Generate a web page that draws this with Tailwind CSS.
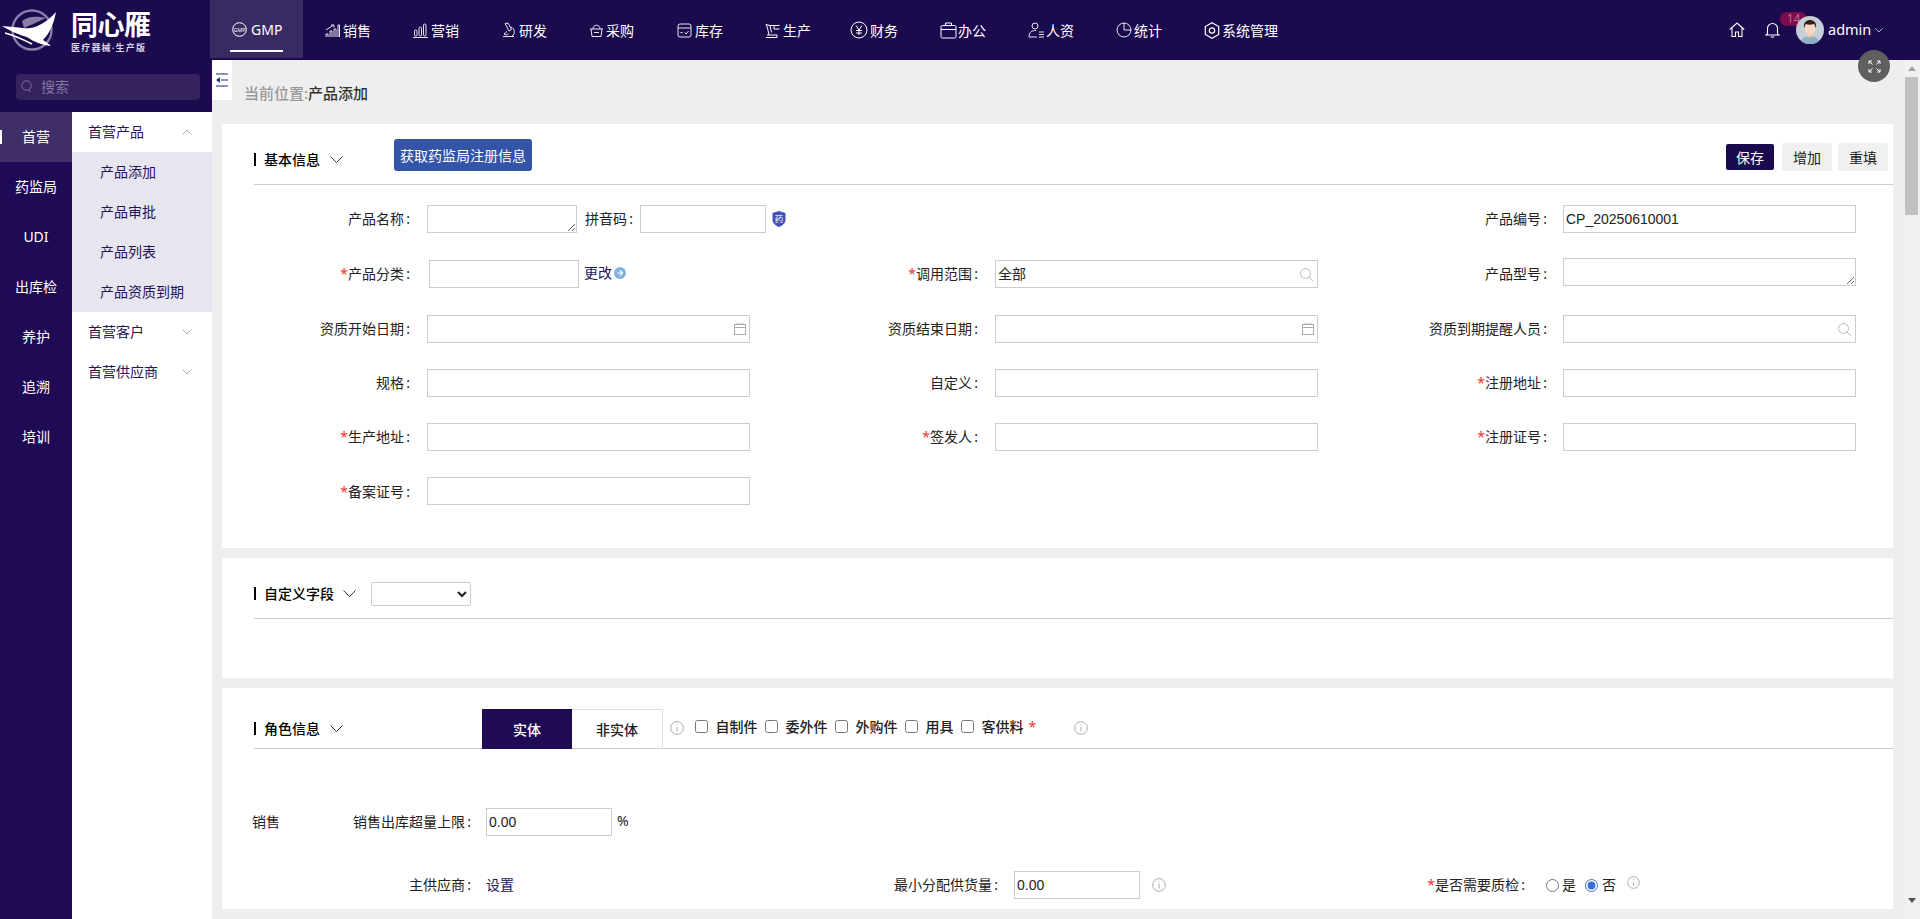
<!DOCTYPE html>
<html lang="zh-CN">
<head>
<meta charset="utf-8">
<title>产品添加</title>
<script src="https://cdn.jsdelivr.net/npm/@tailwindcss/browser@4"></script>
</head>
<body class="h-screen overflow-hidden bg-[#eeeeee] text-[14px] text-[#222] font-['Noto_Sans','Noto_Sans_CJK_SC',sans-serif]">
<div class="relative flex h-[919px] flex-col">

  <!-- top bar -->
  <header class="flex h-[60px] shrink-0 bg-[#1b0a4e] text-white">
    <div class="flex w-[210px] shrink-0">
      <svg class="mt-[9px] h-[42px] w-[58px] shrink-0" viewBox="0 0 58 42" fill="none">
        <circle cx="32" cy="21" r="19.5" stroke="#8a7ea8" stroke-width="2.4"/>
        <path d="M22 12 C30 6 40 8 46 9 C38 13 30 16 24 19Z" fill="#8a7ea8"/>
        <path d="M56 3 C54 14 50 24 43 31 C46 33 49 35 51 37 C42 36 34 33 27 28 C20 26 10 22 2 17 C10 18 17 18 23 19 C34 21 46 14 56 3Z" fill="#fff"/>
        <path d="M5 24 C14 26 22 30 32 35" stroke="#fff" stroke-width="1.5"/>
      </svg>
      <div class="ml-[13px] flex flex-col">
        <span class="mt-[8px] text-[27px] font-bold leading-[34px] tracking-[-0.5px] whitespace-nowrap">同心雁</span>
        <span class="text-[9px] font-bold leading-[12px] tracking-[1.2px] whitespace-nowrap text-[#d8d3e6]">医疗器械·生产版</span>
      </div>
    </div>
    <nav class="flex items-start text-[14px]">
      <a class="relative flex h-[58px] w-[93px] items-center gap-[4px] bg-[#3a2a63] pl-[22px]">
        <svg class="h-[15px] w-[15px]" viewBox="0 0 15 15" fill="none" stroke="#fff"><circle cx="7.5" cy="7.5" r="6.8"/><text x="7.5" y="9.5" text-anchor="middle" font-size="5.2" fill="#fff" stroke="none">GMP</text></svg>
        <span>GMP</span>
        <span class="absolute bottom-[6px] left-[20px] h-[2px] w-[53px] bg-white"></span>
      </a>
      <a class="flex h-[60px] w-[88px] items-center gap-[3px] pl-[22px]">
        <svg class="h-[15px] w-[15px]" viewBox="0 0 15 15" fill="none" stroke="#fff" stroke-width="0.9"><path d="M1 14v-3h2v3M5 14V8h2v6M9 14V6h2v8M13 14V2h1.500v12M1 7 8 2.500M6 2h3v2.500"/></svg>
        <span>销售</span>
      </a>
      <a class="flex h-[60px] w-[88px] items-center gap-[3px] pl-[22px]">
        <svg class="h-[15px] w-[15px]" viewBox="0 0 15 15" fill="none" stroke="#fff" stroke-width="0.9"><rect x="1.500" y="7" width="2.500" height="6" rx="1.200"/><rect x="6" y="4" width="2.500" height="9" rx="1.200"/><rect x="10.500" y="1" width="2.500" height="12" rx="1.200"/><path d="M0 14.500h15"/></svg>
        <span>营销</span>
      </a>
      <a class="flex h-[60px] w-[88px] items-center gap-[2px] pl-[22px]">
        <svg class="h-[16px] w-[16px]" viewBox="0 0 16 16" fill="none" stroke="#fff" stroke-width="0.9"><path d="M4 1.500 7 1l3.500 6.500-2.500 1.500zM10 5c4 1.500 4.500 7 1 9M2 14.500h11M3 12c1.500 1 3 1 4.500 0M6 9.500 3 12"/></svg>
        <span>研发</span>
      </a>
      <a class="flex h-[60px] w-[88px] items-center gap-[2px] pl-[22px]">
        <svg class="h-[15px] w-[15px]" viewBox="0 0 15 15" fill="none" stroke="#fff" stroke-width="0.9"><path d="M1 6h13M2 6l1 7.500h9L13 6M4 6c0-5 7-5 7 0M5 9.500h5"/></svg>
        <span>采购</span>
      </a>
      <a class="flex h-[60px] w-[88px] items-center gap-[3px] pl-[22px]">
        <svg class="h-[15px] w-[15px]" viewBox="0 0 15 15" fill="none" stroke="#fff" stroke-width="0.9"><rect x="1" y="1" width="13" height="13" rx="2"/><path d="M1 5h13M3.500 9.500h2M7.500 9.500l1.500 1.500 2.500-3"/></svg>
        <span>库存</span>
      </a>
      <a class="flex h-[60px] w-[86px] items-center gap-[3px] pl-[22px]">
        <svg class="h-[15px] w-[15px]" viewBox="0 0 15 15" fill="none" stroke="#fff" stroke-width="1"><path d="M1 1.500 5 2.500 6.500 9.500M1 1.500 2.500 5 4 12M5 2.500h9.500M9 2.500V6h5.500M1 14.500h11v-2.500H2"/></svg>
        <span>生产</span>
      </a>
      <a class="flex h-[60px] w-[89px] items-center gap-[2px] pl-[21px]">
        <svg class="h-[18px] w-[18px]" viewBox="0 0 18 18" fill="none" stroke="#fff"><circle cx="9" cy="9" r="8"/><path d="M6 4.500 9 9l3-4.500M6 9.500h6M6 12h6M9 9v5"/></svg>
        <span>财务</span>
      </a>
      <a class="flex h-[60px] w-[88px] items-center gap-[1px] pl-[22px]">
        <svg class="h-[17px] w-[17px]" viewBox="0 0 17 17" fill="none" stroke="#fff"><rect x="1" y="3.500" width="15" height="12.500" rx="1.500"/><path d="M1 7.500h15M5.500 3.500V1h6v2.500"/></svg>
        <span>办公</span>
      </a>
      <a class="flex h-[60px] w-[88px] items-center gap-[2px] pl-[22px]">
        <svg class="h-[16px] w-[16px]" viewBox="0 0 16 16" fill="none" stroke="#fff" stroke-width="0.9"><circle cx="7" cy="4" r="3"/><path d="M1 15c0-5 3-6.500 7-6.500M1 15h8M11 10h5M11 12.500h5M11 15h5"/></svg>
        <span>人资</span>
      </a>
      <a class="flex h-[60px] w-[88px] items-center gap-[2px] pl-[22px]">
        <svg class="h-[16px] w-[16px]" viewBox="0 0 16 16" fill="none" stroke="#fff" stroke-width="0.9"><circle cx="8" cy="8" r="7"/><path d="M8 1v7h7"/></svg>
        <span>统计</span>
      </a>
      <a class="flex h-[60px] items-center gap-[2px] pl-[22px]">
        <svg class="h-[17px] w-[16px]" viewBox="0 0 16 17" fill="none" stroke="#fff" stroke-width="1.200"><path d="M8 .8 14.700 4.600v7.800L8 16.200 1.300 12.400V4.600z"/><circle cx="8" cy="8.500" r="2.700"/></svg>
        <span>系统管理</span>
      </a>
    </nav>
    <div class="ml-auto flex h-[60px] items-center pr-[37px]">
      <svg class="h-[16px] w-[16px]" viewBox="0 0 16 16" fill="none" stroke="#fff" stroke-width="1.100"><path d="M.8 7.500 8 1l7.200 6.500M3 6v8.500h3.500V10h3v4.500H13V6"/></svg>
      <svg class="ml-[20px] h-[16px] w-[15px]" viewBox="0 0 15 16" fill="none" stroke="#fff" stroke-width="1.100"><path d="M2.500 12V6.500a5 5 0 0 1 10 0V12l1.500 1H1zM6 14.500c.5 1 2.500 1 3 0"/></svg>
      <div class="relative ml-[16px] flex items-center">
        <span class="absolute -left-[16px] -top-[4px] h-[14px] w-[27px] rounded-full bg-[#7c0d4c] text-center text-[12px] leading-[14px] text-[#b3718f]">14</span>
        <svg class="relative h-[28px] w-[28px]" viewBox="0 0 28 28">
          <circle cx="14" cy="14" r="14" fill="#c6ced6"/>
          <path d="M5 25c2-4 5-5 9-5s7 1 9 5a14 14 0 0 1-18 0z" fill="#8fb0c9"/>
          <rect x="11.500" y="16" width="5" height="5" fill="#efc8a8"/>
          <ellipse cx="14" cy="12.500" rx="5.500" ry="6.500" fill="#f6d7bd"/>
          <path d="M8 12c-1-6 3-8 6-8s7 2 6 8c-1-2-1-3-2-4-3 1-6 1-8 0-1 1-1 2-2 4z" fill="#33201c"/>
        </svg>
      </div>
      <span class="ml-[4px] w-[42px] whitespace-nowrap text-[14.5px]">admin</span>
      <svg class="ml-[5px] h-[5px] w-[8px]" viewBox="0 0 8 5" fill="none" stroke="#b9b3cc"><path d="M.5.500 4 4 7.500.500"/></svg>
    </div>
  </header>

  <div class="flex min-h-0 flex-1">
    <!-- left sidebars -->
    <aside class="flex w-[212px] shrink-0 flex-col">
      <div class="flex h-[52px] shrink-0 items-start bg-[#1b0a4e] pl-[16px] pt-[14px]">
        <div class="flex h-[26px] w-[184px] shrink-0 items-center gap-[9px] rounded-[4px] bg-[#35235f] pb-[2px] pl-[5px] text-[#80759f]">
          <svg class="h-[13px] w-[11px]" viewBox="0 0 11 13" fill="none" stroke="#80759f"><circle cx="5.500" cy="5.500" r="4.700"/><path d="m8 9.500 1.500 2.500"/></svg>
          <span>搜索</span>
        </div>
      </div>
      <div class="flex min-h-0 flex-1">
        <div class="w-[72px] shrink-0 bg-[#1f0a55] text-center leading-[50px] text-white">
          <div class="relative h-[50px] bg-[#3f2e68]"><span class="absolute left-0 top-[18px] h-[14px] w-[2px] bg-white"></span>首营</div>
          <div class="h-[50px]">药监局</div>
          <div class="h-[50px]">UDI</div>
          <div class="h-[50px]">出库检</div>
          <div class="h-[50px]">养护</div>
          <div class="h-[50px]">追溯</div>
          <div class="h-[50px]">培训</div>
        </div>
        <div class="flex-1 bg-white leading-[40px] text-[#241458]">
          <div class="flex h-[40px] items-center justify-between pl-[16px] pr-[20px]">首营产品
            <svg class="h-[6px] w-[10px]" viewBox="0 0 10 6" fill="none" stroke="#a9a9a9"><path d="M.5 5.500 5 1l4.500 4.500"/></svg>
          </div>
          <div class="bg-[#e7e6ee] pl-[28px]">
            <div class="h-[40px]">产品添加</div>
            <div class="h-[40px]">产品审批</div>
            <div class="h-[40px]">产品列表</div>
            <div class="h-[40px]">产品资质到期</div>
          </div>
          <div class="flex h-[40px] items-center justify-between pl-[16px] pr-[20px]">首营客户
            <svg class="h-[6px] w-[10px]" viewBox="0 0 10 6" fill="none" stroke="#a9a9a9"><path d="M.5.500 5 5l4.500-4.500"/></svg>
          </div>
          <div class="flex h-[40px] items-center justify-between pl-[16px] pr-[20px]">首营供应商
            <svg class="h-[6px] w-[10px]" viewBox="0 0 10 6" fill="none" stroke="#a9a9a9"><path d="M.5.500 5 5l4.500-4.500"/></svg>
          </div>
        </div>
      </div>
    </aside>

    <!-- main -->
    <main class="min-w-0 flex-1">
      <div class="flex h-[64px]">
        <div class="flex h-[40px] w-[20px] items-center justify-center bg-white">
          <svg class="h-[14px] w-[12px]" viewBox="0 0 12 14" fill="#8b90c4"><rect y="0" width="12" height="2"/><rect x="5" y="6" width="7" height="2"/><rect y="12" width="12" height="2"/><path d="M4 4v6L0 7z" fill="#2a3a9a"/></svg>
        </div>
        <div class="pl-[12px] pt-[24px] text-[15px] font-medium leading-[18px] text-[#999]">当前位置:<span class="text-[#333]">产品添加</span></div>
      </div>

      <!-- panel 1 -->
      <section class="ml-[10px] mr-[12px] h-[424px] bg-white">
        <div class="ml-[32px] flex h-[61px] items-start border-b border-[#ccc] pr-[5px]">
          <div class="mt-[26px] flex h-[18px] w-[140px] items-center">
            <span class="h-[13px] w-[2px] bg-black"></span>
            <span class="ml-[8px] font-medium text-black">基本信息</span>
            <svg class="ml-[10px] h-[7px] w-[13px]" viewBox="0 0 13 7" fill="none" stroke="#333"><path d="m.5.500 6 6 6-6"/></svg>
          </div>
          <button class="mt-[15px] h-[32px] w-[138px] rounded-[3px] bg-[#3454a8] text-white">获取药监局注册信息</button>
          <button class="ml-auto mt-[20px] h-[26px] w-[48px] rounded-[2px] bg-[#1b0a4e] text-white">保存</button>
          <button class="ml-[8px] mt-[19px] h-[28px] w-[50px] rounded-[3px] bg-[#f0f0f0]">增加</button>
          <button class="ml-[6px] mt-[19px] h-[28px] w-[50px] rounded-[3px] bg-[#f0f0f0]">重填</button>
        </div>

        <div class="pt-[20px] leading-[28px]">
          <!-- row 1 -->
          <div class="grid h-[55px] grid-cols-[568px_568px_1fr]">
            <div class="flex items-start">
              <label class="w-[188px] text-right">产品名称&thinsp;:</label>
              <textarea class="ml-[17px] h-[28px] w-[150px] border border-[#ccc]"></textarea>
              <label class="ml-[8px]">拼音码&thinsp;:</label>
              <input class="ml-[7px] h-[28px] w-[126px] border border-[#ccc]">
              <svg class="ml-[6px] mt-[6px] h-[16px] w-[14px]" viewBox="0 0 14 16"><path d="M7 0 13.500 2v7c0 3-3 5.500-6.500 7C3.500 14.500.5 12 .5 9V2z" fill="#3f51b5"/><text x="7" y="11" text-anchor="middle" font-size="8.500" fill="#fff">药</text></svg>
            </div>
            <div></div>
            <div class="flex items-start">
              <label class="w-[189px] text-right">产品编号&thinsp;:</label>
              <input class="ml-[16px] h-[28px] w-[293px] border border-[#ccc] pl-[2px] font-['Liberation_Sans'] text-[14px]" value="CP_20250610001">
            </div>
          </div>
          <!-- row 2 -->
          <div class="grid h-[55px] grid-cols-[568px_568px_1fr]">
            <div class="flex items-start">
              <label class="w-[188px] text-right"><span class="text-[#e33]">*</span>产品分类&thinsp;:</label>
              <input class="ml-[19px] h-[28px] w-[150px] border border-[#ccc]">
              <span class="ml-[5px] -mt-[1px] text-[#241458]">更改</span>
              <svg class="ml-[2px] mt-[7px] h-[12px] w-[12px]" viewBox="0 0 12 12"><circle cx="6" cy="6" r="6" fill="#7fb0e0"/><path d="M3 6h5M6 3.500 8.500 6 6 8.500" fill="none" stroke="#fff" stroke-width="1.200"/></svg>
            </div>
            <div class="flex items-start">
              <label class="w-[188px] text-right"><span class="text-[#e33]">*</span>调用范围&thinsp;:</label>
              <div class="relative ml-[17px] h-[28px] w-[323px]">
                <input class="h-[28px] w-full border border-[#ccc] pl-[2px]" value="全部">
                <svg class="absolute right-[4px] top-[7px] h-[15px] w-[15px]" viewBox="0 0 15 15" fill="none" stroke="#bbb"><circle cx="6.500" cy="6.500" r="5"/><path d="m10 10 4 4"/></svg>
              </div>
            </div>
            <div class="flex items-start">
              <label class="w-[189px] text-right">产品型号&thinsp;:</label>
              <textarea class="ml-[16px] -mt-[2px] h-[28px] w-[293px] border border-[#ccc]"></textarea>
            </div>
          </div>
          <!-- row 3 -->
          <div class="grid h-[54px] grid-cols-[568px_568px_1fr]">
            <div class="flex items-start">
              <label class="w-[188px] text-right">资质开始日期&thinsp;:</label>
              <div class="relative ml-[17px] h-[28px] w-[323px]">
                <input class="h-[28px] w-full border border-[#ccc]">
                <svg class="absolute right-[4px] top-[8px] h-[12px] w-[12px]" viewBox="0 0 12 12" fill="none" stroke="#aaa"><rect x=".5" y="1.500" width="11" height="10"/><path d="M.5 4.500h11M3 0v2M6 0v2M9 0v2"/></svg>
              </div>
            </div>
            <div class="flex items-start">
              <label class="w-[188px] text-right">资质结束日期&thinsp;:</label>
              <div class="relative ml-[17px] h-[28px] w-[323px]">
                <input class="h-[28px] w-full border border-[#ccc]">
                <svg class="absolute right-[4px] top-[8px] h-[12px] w-[12px]" viewBox="0 0 12 12" fill="none" stroke="#aaa"><rect x=".5" y="1.500" width="11" height="10"/><path d="M.5 4.500h11M3 0v2M6 0v2M9 0v2"/></svg>
              </div>
            </div>
            <div class="flex items-start">
              <label class="w-[189px] text-right">资质到期提醒人员&thinsp;:</label>
              <div class="relative ml-[16px] h-[28px] w-[293px]">
                <input class="h-[28px] w-full border border-[#ccc]">
                <svg class="absolute right-[4px] top-[7px] h-[15px] w-[15px]" viewBox="0 0 15 15" fill="none" stroke="#bbb"><circle cx="6.500" cy="6.500" r="5"/><path d="m10 10 4 4"/></svg>
              </div>
            </div>
          </div>
          <!-- row 4 -->
          <div class="grid h-[54px] grid-cols-[568px_568px_1fr]">
            <div class="flex items-start">
              <label class="w-[188px] text-right">规格&thinsp;:</label>
              <input class="ml-[17px] h-[28px] w-[323px] border border-[#ccc]">
            </div>
            <div class="flex items-start">
              <label class="w-[188px] text-right">自定义&thinsp;:</label>
              <input class="ml-[17px] h-[28px] w-[323px] border border-[#ccc]">
            </div>
            <div class="flex items-start">
              <label class="w-[189px] text-right"><span class="text-[#e33]">*</span>注册地址&thinsp;:</label>
              <input class="ml-[16px] h-[28px] w-[293px] border border-[#ccc]">
            </div>
          </div>
          <!-- row 5 -->
          <div class="grid h-[54px] grid-cols-[568px_568px_1fr]">
            <div class="flex items-start">
              <label class="w-[188px] text-right"><span class="text-[#e33]">*</span>生产地址&thinsp;:</label>
              <input class="ml-[17px] h-[28px] w-[323px] border border-[#ccc]">
            </div>
            <div class="flex items-start">
              <label class="w-[188px] text-right"><span class="text-[#e33]">*</span>签发人&thinsp;:</label>
              <input class="ml-[17px] h-[28px] w-[323px] border border-[#ccc]">
            </div>
            <div class="flex items-start">
              <label class="w-[189px] text-right"><span class="text-[#e33]">*</span>注册证号&thinsp;:</label>
              <input class="ml-[16px] h-[28px] w-[293px] border border-[#ccc]">
            </div>
          </div>
          <!-- row 6 -->
          <div class="flex items-start">
            <label class="mt-[1px] w-[188px] text-right"><span class="text-[#e33]">*</span>备案证号&thinsp;:</label>
            <input class="ml-[17px] h-[28px] w-[323px] border border-[#ccc]">
          </div>
        </div>
      </section>

      <!-- panel 2 -->
      <section class="ml-[10px] mr-[12px] mt-[10px] h-[120px] bg-white">
        <div class="ml-[32px] flex h-[61px] items-start border-b border-[#ccc]">
          <div class="mt-[26px] flex h-[18px] items-center">
            <span class="h-[13px] w-[2px] bg-black"></span>
            <span class="ml-[8px] font-medium text-black">自定义字段</span>
            <svg class="ml-[9px] h-[7px] w-[13px]" viewBox="0 0 13 7" fill="none" stroke="#333"><path d="m.5.500 6 6 6-6"/></svg>
          </div>
          <select class="ml-[15px] mt-[24px] h-[24px] w-[100px] rounded-[2px] border border-[#ccc] bg-white"><option></option></select>
        </div>
      </section>

      <!-- panel 3 -->
      <section class="ml-[10px] mr-[12px] mt-[10px] h-[221px] overflow-hidden bg-white">
        <div class="ml-[32px] flex h-[61px] items-start border-b border-[#ccc]">
          <div class="mt-[31px] flex h-[18px] w-[228px] items-center">
            <span class="h-[13px] w-[2px] bg-black"></span>
            <span class="ml-[8px] font-medium text-black">角色信息</span>
            <svg class="ml-[10px] h-[7px] w-[13px]" viewBox="0 0 13 7" fill="none" stroke="#333"><path d="m.5.500 6 6 6-6"/></svg>
          </div>
          <div class="mt-[21px] flex h-[40px] w-[90px] items-center justify-center bg-[#1f0a55] font-medium text-white">实体</div>
          <div class="mt-[21px] flex h-[40px] w-[91px] items-center justify-center border-r border-t border-[#ddd] font-medium">非实体</div>
          <div class="mt-[29px] flex h-[18px] items-center">
            <svg class="ml-[7px] mt-[4px] h-[14px] w-[14px]" viewBox="0 0 14 14" fill="none" stroke="#aaa"><circle cx="7" cy="7" r="6.300"/><path d="M7 6v4.500M7 3.500v1"/></svg>
            <input type="checkbox" class="ml-[11px] h-[13px] w-[13px]"><span class="ml-[7.500px] font-medium">自制件</span>
            <input type="checkbox" class="ml-[7.500px] h-[13px] w-[13px]"><span class="ml-[7.500px] font-medium">委外件</span>
            <input type="checkbox" class="ml-[7.500px] h-[13px] w-[13px]"><span class="ml-[7.500px] font-medium">外购件</span>
            <input type="checkbox" class="ml-[7.500px] h-[13px] w-[13px]"><span class="ml-[7.500px] font-medium">用具</span>
            <input type="checkbox" class="ml-[7.500px] h-[13px] w-[13px]"><span class="ml-[7.500px] font-medium">客供料</span>
            <span class="ml-[5px] text-[#e33]">*</span>
            <svg class="ml-[38px] mt-[4px] h-[14px] w-[14px]" viewBox="0 0 14 14" fill="none" stroke="#aaa"><circle cx="7" cy="7" r="6.300"/><path d="M7 6v4.500M7 3.500v1"/></svg>
          </div>
        </div>
        <div class="ml-[30px] mt-[59px] flex items-start leading-[28px]">
          <div class="flex w-[219px] justify-between"><span>销售</span><label>销售出库超量上限&thinsp;:</label></div>
          <input class="ml-[15px] h-[28px] w-[126px] border border-[#ccc] pl-[2px] font-['Liberation_Sans']" value="0.00">
          <span class="ml-[5px] -mt-[1px]">%</span>
        </div>
        <div class="mt-[35px] flex items-start leading-[28px]">
          <div class="flex w-[568px]">
            <label class="w-[249px] text-right">主供应商&thinsp;:</label>
            <span class="ml-[15px] text-[#241458]">设置</span>
          </div>
          <div class="flex w-[568px] items-start">
            <label class="w-[208px] text-right">最小分配供货量&thinsp;:</label>
            <input class="ml-[16px] h-[28px] w-[126px] border border-[#ccc] pl-[2px] font-['Liberation_Sans']" value="0.00">
            <svg class="ml-[12px] mt-[7px] h-[14px] w-[14px]" viewBox="0 0 14 14" fill="none" stroke="#aaa"><circle cx="7" cy="7" r="6.300"/><path d="M7 6v4.500M7 3.500v1"/></svg>
          </div>
          <div class="flex items-center">
            <label class="w-[167px] text-right"><span class="text-[#e33]">*</span>是否需要质检&thinsp;:</label>
            <input type="radio" name="qc" class="ml-[21px] h-[13px] w-[13px]"><span class="ml-[3px]">是</span>
            <input type="radio" name="qc" checked class="ml-[9px] h-[13px] w-[13px] accent-[#3b6fe0]"><span class="ml-[4px]">否</span>
            <svg class="-mt-[5px] ml-[11px] h-[13px] w-[13px]" viewBox="0 0 14 14" fill="none" stroke="#aaa"><circle cx="7" cy="7" r="6.300"/><path d="M7 6v4.500M7 3.500v1"/></svg>
          </div>
        </div>
      </section>
    </main>

    <!-- page scrollbar -->
    <div class="flex w-[15px] shrink-0 flex-col items-start bg-[#f1f1f1] pb-[16px] pt-[6px]">
      <span class="ml-[3px] h-0 w-0 border-x-[4px] border-b-[5px] border-x-transparent border-b-[#a3a3a3]"></span>
      <span class="mt-[6px] h-[138px] w-[13px] bg-[#c1c1c1]"></span>
      <span class="ml-[3px] mt-auto h-0 w-0 border-x-[4px] border-t-[5px] border-x-transparent border-t-[#505050]"></span>
    </div>
  </div>

  <!-- floating fullscreen button -->
  <div class="absolute left-[1858px] top-[50px] flex h-[32px] w-[32px] items-center justify-center rounded-full bg-[#5f5f5f]">
    <svg class="h-[13px] w-[13px]" viewBox="0 0 13 13" fill="none" stroke="#fff"><path d="M1 4V1h3M1 1l3.500 3.500M9 1h3v3M12 1 8.500 4.500M1 9v3h3M1 12l3.500-3.500M9 12h3V9M12 12 8.500 8.500"/></svg>
  </div>
</div>
</body>
</html>
